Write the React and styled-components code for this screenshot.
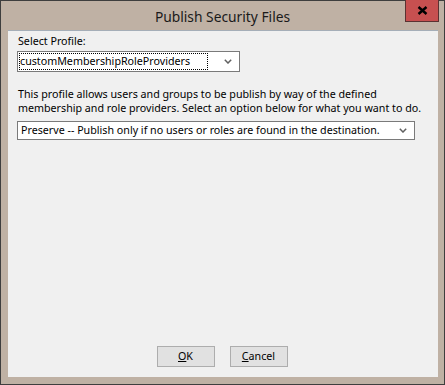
import React from "react";
import styled, { createGlobalStyle } from "styled-components";

const Global = createGlobalStyle`
  html, body { margin: 0; padding: 0; background: #bfb1a4; }
  * { box-sizing: border-box; }
`;

const Window = styled.div`
  width: 445px;
  height: 385px;
  background: #bfb1a4;
  border: 1px solid #3e3e3e;
  display: flex;
  flex-direction: column;
  font-family: "Noto Sans", "Open Sans", sans-serif;
  position: relative;
`;

const TitleBar = styled.div`
  height: 29px;
  display: flex;
  align-items: center;
  justify-content: center;
  position: relative;
`;

const Title = styled.div`
  font-family: "Noto Sans", sans-serif;
  font-size: 13.8px;
  color: #1a1a1a;
  padding-top: 1px;
`;

const CloseButton = styled.div`
  position: absolute;
  top: -1px;
  right: 5px;
  width: 34px;
  height: 22px;
  background: #c75050;
  border: 1px solid #5a3232;
  border-top: none;
  display: flex;
  align-items: center;
  justify-content: center;
`;

const Client = styled.div`
  flex: 1;
  margin: 0 6px 7px 7px;
  background: #f0f0f0;
  border-top: 1px solid #a5aeb8;
  display: flex;
  flex-direction: column;
  padding: 3px 0 0 9px;
  font-size: 10.7px;
  color: #000;
`;

const Label = styled.div`
  line-height: 15px;
  margin-left: 1px;
`;

const Combo = styled.div`
  width: ${(p) => p.$w}px;
  height: ${(p) => p.$h}px;
  margin-top: ${(p) => p.$mt}px;
  border: 1px solid #7a7a7a;
  background: #fff;
  display: flex;
  align-items: center;
  padding: 0 0 0 ${(p) => (p.$focus ? 1 : 3)}px;
`;

const ComboText = styled.div`
  flex: 1;
  line-height: 15px;
  height: ${(p) => (p.$focus ? "17px" : "auto")};
  border: ${(p) => (p.$focus ? "1px dotted #000" : "none")};
  margin-right: ${(p) => (p.$focus ? "16px" : "0")};
  display: flex;
  align-items: center;
  white-space: nowrap;
  overflow: hidden;
`;

const Chevron = styled.svg`
  width: 8px;
  height: 5px;
  margin-right: 7px;
  flex: none;
`;

const Description = styled.div`
  line-height: 14px;
  margin-top: 15px;
  margin-left: 1px;
  width: 418px;
`;

const Spacer = styled.div`
  flex: 1;
`;

const ButtonRow = styled.div`
  display: flex;
  justify-content: center;
  gap: 15px;
  margin: 0 0 10px -11px;
`;

const Button = styled.div`
  width: 58px;
  height: 21px;
  background: #e1e1e1;
  border: 1px solid #adadad;
  display: flex;
  align-items: center;
  justify-content: center;
  font-size: 10.7px;
  line-height: 15px;
  color: #000;
`;

const U = styled.span`
  text-decoration: underline;
`;

const ChevronIcon = () => (
  <Chevron viewBox="0 0 8 5">
    <path d="M0.8 0.8 L4 4 L7.2 0.8" fill="none" stroke="#606060" strokeWidth="1.5" />
  </Chevron>
);

export default function App() {
  return (
    <>
      <Global />
      <Window>
        <TitleBar>
          <Title>Publish Security Files</Title>
          <CloseButton>
            <svg width="11" height="9" viewBox="0 0 11 9">
              <path d="M1.5 1 L9.5 8 M9.5 1 L1.5 8" stroke="#000" strokeWidth="2.4" />
            </svg>
          </CloseButton>
        </TitleBar>
        <Client>
          <Label>Select Profile:</Label>
          <Combo $w={223} $h={21} $mt={2} $focus>
            <ComboText $focus>customMembershipRoleProviders</ComboText>
            <ChevronIcon />
          </Combo>
          <Description>
            This profile allows users and groups to be publish by way of the defined membership and role providers. Select an option below for what you want to do.
          </Description>
          <Combo $w={398} $h={19} $mt={6}>
            <ComboText>Preserve -- Publish only if no users or roles are found in the destination.</ComboText>
            <ChevronIcon />
          </Combo>
          <Spacer />
          <ButtonRow>
            <Button><span><U>O</U>K</span></Button>
            <Button><span><U>C</U>ancel</span></Button>
          </ButtonRow>
        </Client>
      </Window>
    </>
  );
}
